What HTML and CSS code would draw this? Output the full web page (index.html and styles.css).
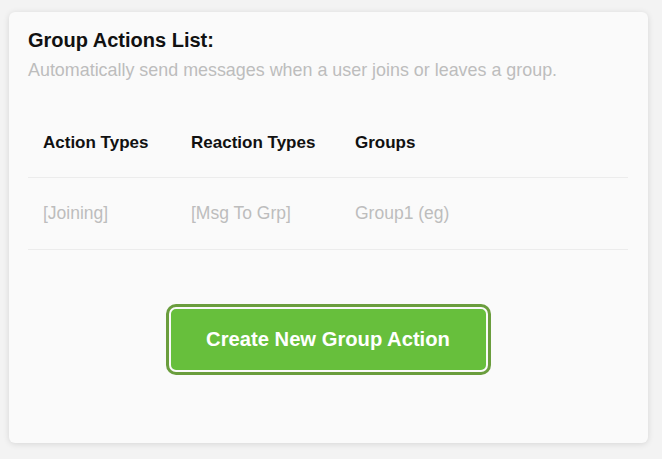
FILE: index.html
```html
<!DOCTYPE html>
<html>
<head>
<meta charset="utf-8">
<link rel="stylesheet" href="styles.css">
</head>
<body>
<div class="card">
  <h2 class="title">Group Actions List:</h2>
  <p class="subtitle">Automatically send messages when a user joins or leaves a group.</p>
  <div class="table">
    <div class="row head">
      <div class="cell">Action Types</div>
      <div class="cell">Reaction Types</div>
      <div class="cell">Groups</div>
    </div>
    <div class="row body">
      <div class="cell">[Joining]</div>
      <div class="cell">[Msg To Grp]</div>
      <div class="cell">Group1 (eg)</div>
    </div>
  </div>
  <div class="actions">
    <button class="btn">Create New Group Action</button>
  </div>
</div>
</body>
</html>
```
FILE: styles.css
```css
html, body {
  margin: 0;
  padding: 0;
  background: #f3f3f3;
  font-family: "Liberation Sans", Arial, sans-serif;
}
body {
  padding: 12px 14px 16px 9px;
  height: 459px;
  box-sizing: border-box;
}
.card {
  background: #fafafa;
  border-radius: 6px;
  box-shadow: 0 1px 6px rgba(0,0,0,0.12);
  height: 431px;
  box-sizing: border-box;
  padding: 17px 20px 0 19px;
}
.title {
  margin: 0;
  font-size: 20px;
  font-weight: bold;
  color: #111;
  line-height: 22px;
}
.subtitle {
  margin: 9px 0 0;
  font-size: 17.9px;
  color: #bdbdbd;
  line-height: 20px;
  white-space: nowrap;
}
.table {
  margin-top: 29px;
}
.row {
  display: grid;
  grid-template-columns: 148px 164px 1fr;
  border-bottom: 1px solid #ececec;
}
.row.head {
  height: 68px;
  align-items: center;
}
.row.body {
  height: 71px;
  align-items: center;
}
.cell {
  padding-left: 15px;
}
.head .cell {
  font-size: 17px;
  font-weight: bold;
  color: #111;
}
.body .cell {
  font-size: 17.5px;
  color: #bdbdbd;
}
.actions {
  display: flex;
  justify-content: center;
  margin-top: 54px;
}
.btn {
  font-family: "Liberation Sans", Arial, sans-serif;
  font-size: 20.2px;
  font-weight: bold;
  color: #fff;
  background: #67bf3c;
  border: 2px solid #fafafa;
  border-radius: 7px;
  box-shadow: 0 0 0 3px #6a9d3d;
  width: 319px;
  height: 65px;
  padding: 0;
  margin: 3px;
}
```
